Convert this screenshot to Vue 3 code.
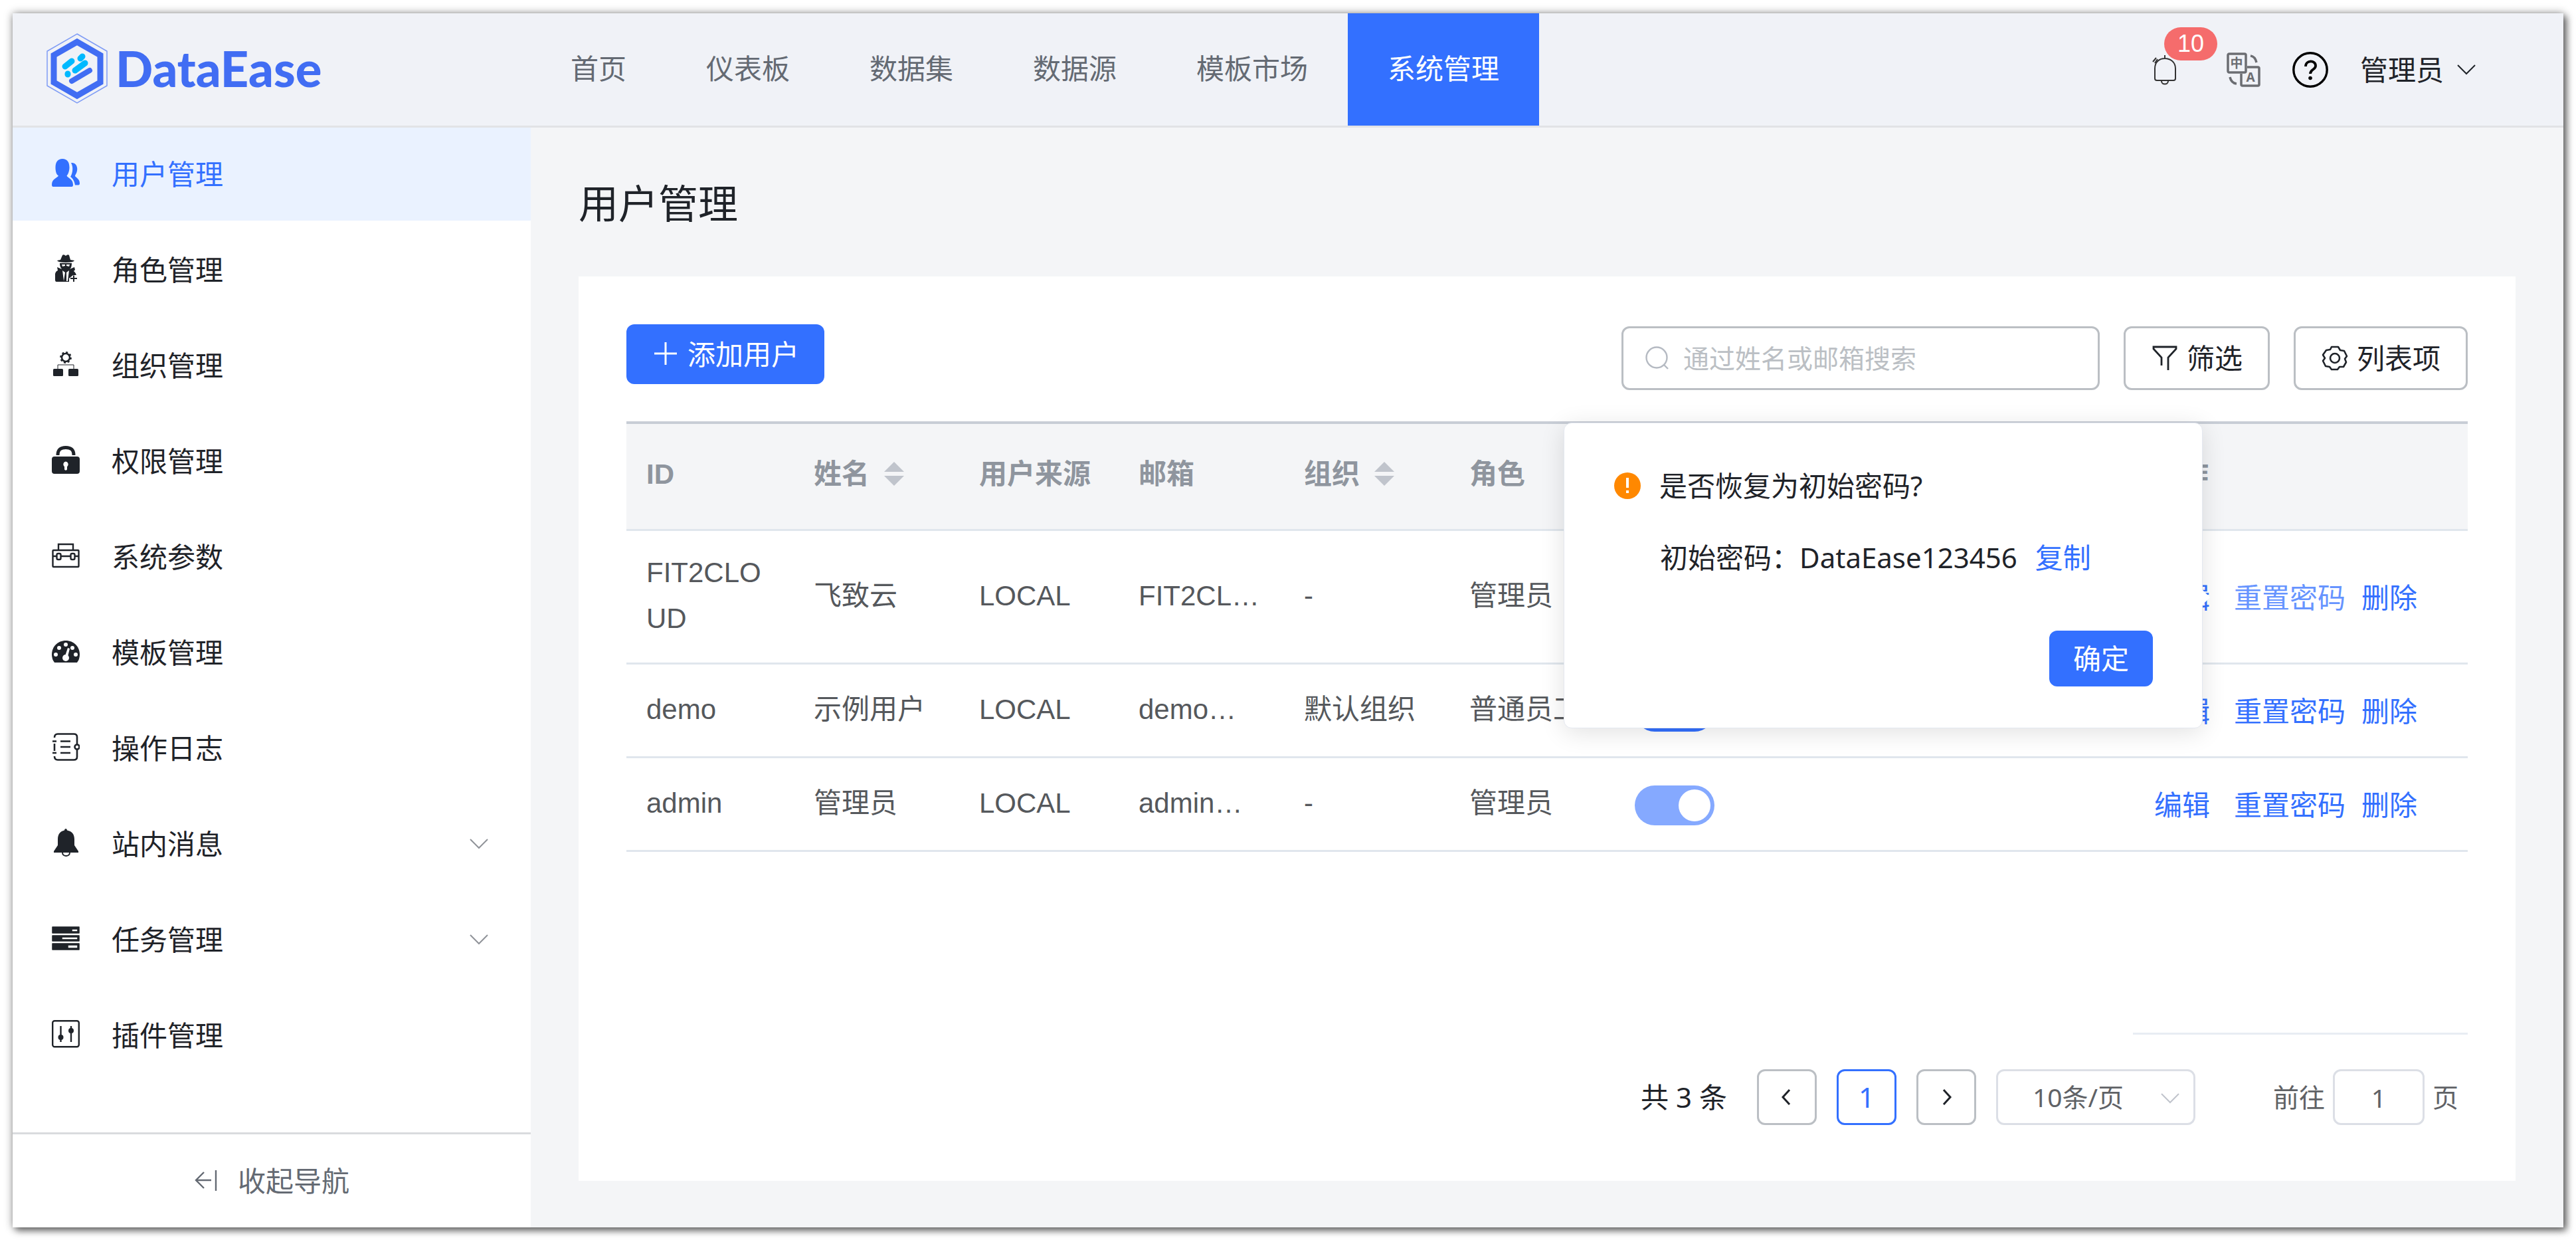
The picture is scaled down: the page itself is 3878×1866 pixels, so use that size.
<template>
  <svg class="sprite" aria-hidden="true">
    <symbol id="i-user" viewBox="0 0 42 42">
      <path d="M29 6C36 5 40 12 37.500 20C36.500 23 35 24 35 26C36 28 42 30 42 37C42 39 41 39.500 39 39.500H35C34 33 31 29 28 27C31 23 33 13 29 6Z" />
      <path d="M16 0C23 0 26.500 5 26.500 13C26.500 19 24 24 22.500 25.500C24 29 32 30 32 39C32 41.500 31 42 29 42H3C1 42 0 41.500 0 39C0 30 8 29 10 25.500C7 24 5.500 19 5.500 13C5.500 5 9 0 16 0Z" />
    </symbol>
    <symbol id="i-role" viewBox="0 0 42 42">
      <path d="M13 8L16 1Q18 -1 21 2Q24 -1 26 1L28 8L34 9Q33 12 21 12Q9 12 8 9Z" />
      <path fill-rule="evenodd" d="M12 13H30Q30 20 27 22L34 19L35 23L33 25Q37 28 37 33L27 41H7Q5 41 5 38V29Q6 25 9 24L8 19L15 22Q12 19 12 13ZM15 15L16 18L20 17V15ZM22 15V17L26 18L27 15ZM16 24L18 40L20 27ZM26 24L22 27V40L24 40Z" />
      <path d="M26 36L32 31L40 31V41H26Z" fill="#fff" />
      <path d="M28 36H38M33 31.500V41" fill="none" stroke="currentColor" stroke-width="2" />
    </symbol>
    <symbol id="i-org" viewBox="0 0 42 42">
      <circle cx="21" cy="11" r="6" fill="none" stroke="currentColor" stroke-width="2.500" />
      <circle cx="21" cy="11" r="7.800" fill="none" stroke="currentColor" stroke-width="2.200" stroke-dasharray="3 3.120" />
      <path d="M9 28V22H33V28" fill="none" stroke="currentColor" stroke-width="1" />
      <rect x="2" y="28" width="15" height="11" rx="1.500" />
      <rect x="25" y="28" width="15" height="11" rx="1.500" />
    </symbol>
    <symbol id="i-lock" viewBox="0 0 42 42">
      <path d="M9 14C9 5 14 2.500 21 2.500S33 5 33 14" fill="none" stroke="currentColor" stroke-width="5" />
      <path fill-rule="evenodd" d="M4 16H38Q42 16 42 20V38Q42 42 38 42H4Q0 42 0 38V20Q0 16 4 16ZM21 23.500A4.500 4.500 0 0 0 19 31.500V35.500Q21 38 23 35.500V31.500A4.500 4.500 0 0 0 21 23.500Z" />
    </symbol>
    <symbol id="i-box" viewBox="0 0 42 42">
      <g fill="none" stroke="currentColor" stroke-width="2.400">
        <path d="M10 13V4H32V13" />
        <rect x="1.500" y="13" width="39" height="25" rx="1" />
        <path d="M2 22H7M14 22H28M35 22H40" />
        <rect x="7.500" y="18" width="6" height="9" rx="2" />
        <rect x="28.500" y="18" width="6" height="9" rx="2" />
      </g>
    </symbol>
    <symbol id="i-gauge" viewBox="0 0 42 42">
      <path d="M4 38Q0 33 0 26C0 14 9 5 21 5S42 14 42 26Q42 33 38 38Z" />
      <g fill="#fff">
        <circle cx="6" cy="26" r="3" /><circle cx="11" cy="16" r="3" /><circle cx="21" cy="11" r="3" />
        <circle cx="31" cy="16" r="3" /><circle cx="36" cy="26" r="3" /><circle cx="21" cy="31" r="5" />
        <path d="M24 16L27 17L23.500 31H19Z" />
      </g>
    </symbol>
    <symbol id="i-log" viewBox="0 0 42 42">
      <g fill="none" stroke="currentColor" stroke-width="2.600">
        <path d="M4 7Q4 1.500 9 1.500H33Q38 1.500 38 6V17M38 25V36Q38 40.500 33 40.500H9Q4 40.500 4 35M4 16V27" />
        <path d="M1 12.500H7M1 30H7M13 12.500H28M13 21H28M13 30H28" />
        <circle cx="38" cy="21" r="3.500" />
      </g>
    </symbol>
    <symbol id="i-bell" viewBox="0 0 42 42">
      <path d="M21 0Q23 0 23 2.500C30 4 34 8 34 16V25L40 34V36H3V34L9 25V16C9 8 13 4 19 2.500Q19 0 21 0Z" />
      <path d="M16 36C16 42.500 27 42.500 27 36" fill="none" stroke="currentColor" stroke-width="2" />
    </symbol>
    <symbol id="i-task" viewBox="0 0 42 42">
      <path fill-rule="evenodd" d="M1 4H41V13H1ZM30 7V11H39V7ZM1 17H41V25H1ZM15 19V23H39V19ZM1 29H41V38H1ZM24 31V36H39V31Z" stroke="currentColor" stroke-width="1.500" stroke-linejoin="round" />
    </symbol>
    <symbol id="i-plugin" viewBox="0 0 42 42">
      <g fill="none" stroke="currentColor" stroke-width="2.400">
        <rect x="1.200" y="1.200" width="39.600" height="39" rx="3" />
        <path d="M13.500 9V33M29 9V33" />
      </g>
      <circle cx="13.500" cy="26" r="4" /><circle cx="29" cy="16" r="4" />
    </symbol>
    <symbol id="i-down" viewBox="0 0 28 28">
      <path d="M1 7L14 20L27 7" fill="none" stroke="currentColor" stroke-width="2" />
    </symbol>
  </svg>

  <div class="app">
    <header class="header">
      <a class="logo" href="#">
        <svg width="92" height="106" viewBox="0 0 92 106" fill="none">
          <path d="M46 1L91 27V79L46 105L1 79V27Z" stroke="#7f9cf5" stroke-width="1.500" />
          <path d="M46 13L81 33V74L46 94L11 74V33Z" stroke="#416df3" stroke-width="9" />
          <g stroke="#00b9ff" stroke-width="9" stroke-linecap="round">
            <path d="M28 50L38 42M51 38L54 35M43 56L58 45M32 61V62" />
            <path d="M38 72L65 56" stroke="#416df3" stroke-width="8" />
          </g>
        </svg>
        <span>DataEase</span>
      </a>
      <nav class="nav">
        <a
          v-for="item in navs"
          :key="item"
          href="#"
          :class="{ active: item === activeNav }"
          @click.prevent="activeNav = item"
        >{{ item }}</a>
      </nav>
      <div class="tools">
        <button class="bell" aria-label="消息">
          <svg width="40" height="46" viewBox="0 0 40 46" fill="none" stroke="#333" stroke-width="2">
            <path d="M19 1V6M4 36V21C4 11 11 6 19 6S35 11 35 21V36Q35 39 32 39H7Q4 39 4 36Z" />
            <path d="M14 40C14 46 24 46 24 40M1 11L6 5M4 13L8 7" />
          </svg>
          <span class="badge">10</span>
        </button>
        <button aria-label="语言">
          <svg width="51" height="52" viewBox="0 0 51 52" fill="none" stroke="#6b6d72" stroke-width="3.500">
            <rect x="2" y="2" width="27" height="28" rx="2" />
            <path d="M31 22H47Q49 22 49 24V48Q49 50 47 50H24Q22 50 22 48V32" />
            <path d="M36 5Q43 6 45 15M5 37Q7 46 15 47" />
            <g class="glyphs" stroke="none" fill="#6b6d72" text-anchor="middle">
              <text x="15" y="23">中</text>
              <text x="36" y="44">A</text>
            </g>
          </svg>
        </button>
        <button aria-label="帮助">
          <svg width="54" height="54" viewBox="0 0 54 54" fill="none" stroke="#000">
            <circle cx="27" cy="27" r="25.200" stroke-width="3.400" />
            <path d="M20 22C20 12 35 12 35 21C35 27 27 26 27 33" stroke-width="3.800" />
            <circle cx="27" cy="39.500" r="2.800" fill="#000" stroke="none" />
          </svg>
        </button>
        <button class="account">
          管理员
          <svg width="28" height="28"><use href="#i-down" /></svg>
        </button>
      </div>
    </header>

    <div class="body">
      <aside class="sidebar">
        <nav class="menu">
          <a
            v-for="item in menus"
            :key="item.name"
            href="#"
            :class="{ active: item.name === activeMenu }"
            @click.prevent="activeMenu = item.name"
          >
            <svg class="menu-icon" width="42" height="42"><use :href="'#i-' + item.icon" /></svg>
            <span>{{ item.name }}</span>
            <svg v-if="item.children" class="arrow" width="28" height="28"><use href="#i-down" /></svg>
          </a>
        </nav>
        <button class="collapse">
          <svg width="36" height="36" viewBox="0 0 36 36" fill="none" stroke="#646a73" stroke-width="2.400">
            <path d="M26 17H3M15 5L3 17L15 29M33 2V33" />
          </svg>
          收起导航
        </button>
      </aside>

      <main class="main">
        <h1>用户管理</h1>
        <section class="card">
          <div class="toolbar">
            <button class="btn primary add">
              <svg width="42" height="42" viewBox="0 0 42 42" stroke="#fff" stroke-width="3">
                <path d="M4 20H38M21 3V37" />
              </svg>
              添加用户
            </button>
            <div class="filters">
              <label class="search">
                <svg width="38" height="38" viewBox="0 0 38 38" fill="none" stroke="#b5bac2" stroke-width="2.400">
                  <circle cx="18" cy="18" r="15.500" />
                  <path d="M29 29L35 35" />
                </svg>
                <input v-model="keyword" type="text" placeholder="通过姓名或邮箱搜索" aria-label="搜索" />
              </label>
              <button class="btn plain">
                <svg width="42" height="42" viewBox="0 0 42 42" fill="none" stroke="#1f2329" stroke-width="2.800">
                  <path d="M16 32V20L4 7V4H38V7L26 20V39" />
                </svg>
                筛选
              </button>
              <button class="btn plain">
                <svg width="42" height="42" viewBox="0 0 42 42" fill="none" stroke="#1f2329" stroke-width="2.600">
                  <path d="M16 4H26L29 9L35 10L39 18L36 22L38 27L34 34L28 34L25 38H16L13 34L7 33L3 25L6 21L3 16L8 9L14 8Z" stroke-linejoin="round" />
                  <circle cx="21" cy="21" r="7" />
                </svg>
                列表项
              </button>
            </div>
          </div>

          <div class="table-wrap">
            <table>
              <colgroup>
                <col class="w-id" /><col class="w-mid" /><col class="w-mail" /><col class="w-mid" />
                <col class="w-mid" /><col class="w-mid" /><col /><col class="w-ops" />
              </colgroup>
              <thead>
                <tr>
                  <th>ID</th>
                  <th>姓名<i class="sort"></i></th>
                  <th>用户来源</th>
                  <th>邮箱</th>
                  <th>组织<i class="sort"></i></th>
                  <th>角色</th>
                  <th aria-label="状态"></th>
                  <th>操作</th>
                </tr>
              </thead>
              <tbody>
                <tr v-for="user in users" :key="user.id">
                  <td class="id">{{ user.id }}</td>
                  <td>{{ user.name }}</td>
                  <td>{{ user.from }}</td>
                  <td>{{ user.email }}</td>
                  <td>{{ user.org }}</td>
                  <td>{{ user.role }}</td>
                  <td class="control">
                    <input
                      v-model="user.enabled"
                      class="switch"
                      type="checkbox"
                      :disabled="user.id === 'admin'"
                      :aria-label="user.name"
                    />
                  </td>
                  <td class="control">
                    <div class="ops">
                      <a class="edit" href="#">编辑</a>
                      <a href="#" :class="{ focus: user.id === 'FIT2CLOUD' }">重置密码</a>
                      <a href="#">删除</a>
                    </div>
                  </td>
                </tr>
              </tbody>
            </table>

            <div v-if="showPopover" class="popover">
              <div class="pop-title">
                <svg width="40" height="40" viewBox="0 0 40 40">
                  <circle cx="20" cy="20" r="20" fill="#ff8800" />
                  <path d="M20 8V23M20 27V31" stroke="#fff" stroke-width="4" />
                </svg>
                是否恢复为初始密码?
              </div>
              <div class="pop-pwd">初始密码：DataEase123456 <a href="#">复制</a></div>
              <button class="btn primary ok" @click="showPopover = false">确定</button>
            </div>
          </div>

          <div class="pager-line"></div>
          <div class="pager">
            <span class="total">共 3 条</span>
            <button class="page" aria-label="上一页">
              <svg width="28" height="28" viewBox="0 0 28 28"><path d="M18 3L8 14L18 25" /></svg>
            </button>
            <button class="page current">1</button>
            <button class="page" aria-label="下一页">
              <svg width="28" height="28" viewBox="0 0 28 28"><path d="M10 3L20 14L10 25" /></svg>
            </button>
            <div class="size">
              <select v-model="pageSize" aria-label="每页条数">
                <option value="10">10条/页</option>
                <option value="20">20条/页</option>
              </select>
              <svg width="28" height="28"><use href="#i-down" /></svg>
            </div>
            <label class="jump">前往<input v-model="page" type="text" />页</label>
          </div>
        </section>
      </main>
    </div>
  </div>
</template>

<script setup>
import { ref } from 'vue';

const navs = ['首页', '仪表板', '数据集', '数据源', '模板市场', '系统管理'];
const activeNav = ref('系统管理');

const menus = [
  { name: '用户管理', icon: 'user' },
  { name: '角色管理', icon: 'role' },
  { name: '组织管理', icon: 'org' },
  { name: '权限管理', icon: 'lock' },
  { name: '系统参数', icon: 'box' },
  { name: '模板管理', icon: 'gauge' },
  { name: '操作日志', icon: 'log' },
  { name: '站内消息', icon: 'bell', children: true },
  { name: '任务管理', icon: 'task', children: true },
  { name: '插件管理', icon: 'plugin' }
];
const activeMenu = ref('用户管理');

const users = ref([
  { id: 'FIT2CLOUD', name: '飞致云', from: 'LOCAL', email: 'FIT2CL…', org: '-', role: '管理员', enabled: true },
  { id: 'demo', name: '示例用户', from: 'LOCAL', email: 'demo…', org: '默认组织', role: '普通员工', enabled: true },
  { id: 'admin', name: '管理员', from: 'LOCAL', email: 'admin…', org: '-', role: '管理员', enabled: true }
]);

const keyword = ref('');
const page = ref('1');
const pageSize = ref('10');
const showPopover = ref(true);
</script>

<style>
body{
  margin: 0;
  background-color: #fff;
}
</style>

<style scoped>
*{
  box-sizing: border-box;
}
.sprite{
  position: absolute;
  width: 0;
  height: 0;
}
.app{
  display: flex;
  flex-direction: column;
  min-height: calc(100vh - 39px);
  margin: 20px 19px 19px;
  background-color: #f4f5f7;
  box-shadow: 0 0 12px rgba(0, 0, 0, .4), 5px 5px 10px rgba(0, 0, 0, .5);
  font-family: 'Noto Sans', 'Noto Sans CJK SC', sans-serif;
  font-size: 42px;
  line-height: 60px;
  color: #1f2329;
}
a{
  color: inherit;
  text-decoration: none;
}
button{
  padding: 0;
  border: none;
  background: none;
  font: inherit;
  color: inherit;
  cursor: pointer;
}
input, select{
  font: inherit;
}
svg{
  display: block;
  flex: none;
  fill: currentColor;
}
svg[fill="none"]{
  fill: none;
}

.header{
  display: flex;
  height: 172px;
  background-color: #f0f2f7;
  border-bottom: 3px solid #e2e3e6;
}
.logo{
  display: flex;
  align-items: center;
  gap: 12px;
  width: 780px;
  padding: 0 0 4px 51px;
  font-family: Lato, sans-serif;
  font-size: 74px;
  font-weight: 900;
  color: #416df3;
}
.nav{
  display: flex;
}
.nav a{
  display: flex;
  align-items: center;
  padding: 0 60px 4px;
  color: #646a73;
}
.nav a.active{
  background-color: #3370ff;
  color: #fff;
}
.tools{
  display: flex;
  align-items: center;
  gap: 48px;
  margin-left: auto;
  padding-right: 132px;
}
.bell{
  position: relative;
  margin-right: 24px;
}
.badge{
  position: absolute;
  left: 18px;
  top: -41px;
  width: 80px;
  height: 50px;
  border-radius: 25px;
  background-color: #f56c6c;
  color: #fff;
  font-family: 'Liberation Sans', sans-serif;
  font-size: 36px;
  line-height: 50px;
}
.glyphs{
  font-size: 19px;
  font-weight: 700;
}
.account{
  display: flex;
  align-items: center;
  gap: 20px;
}

.body{
  display: flex;
  flex: 1;
}
.sidebar{
  display: flex;
  flex-direction: column;
  flex: none;
  width: 780px;
  background-color: #fff;
}
.menu{
  display: flex;
  flex-direction: column;
  gap: 4px;
}
.menu a{
  display: flex;
  align-items: center;
  height: 140px;
  padding: 0 64px 0 59px;
}
.menu a.active{
  background-color: #eaf2ff;
  color: #3370ff;
}
.menu-icon{
  margin: 0 48px 4px 0;
}
.arrow{
  margin-left: auto;
  color: #909399;
}
.collapse{
  display: flex;
  align-items: center;
  justify-content: center;
  gap: 30px;
  height: 143px;
  margin-top: auto;
  border-top: 3px solid #d9dbde;
  color: #646a73;
}

.main{
  display: flex;
  flex-direction: column;
  flex: 1;
  padding: 72px 72px 70px;
}
h1{
  margin: 0 0 68px;
  font-size: 60px;
  line-height: 84px;
  font-weight: 400;
}
.card{
  display: flex;
  flex-direction: column;
  flex: 1;
  padding: 72px 72px 84px;
  background-color: #fff;
}
.toolbar{
  display: flex;
  justify-content: space-between;
  align-items: flex-start;
}
.btn{
  display: flex;
  align-items: center;
  justify-content: center;
  gap: 12px;
  border-radius: 12px;
}
.primary{
  background-color: #3370ff;
  color: #fff;
}
.add{
  height: 90px;
  padding: 0 38px;
}
.filters{
  display: flex;
  gap: 36px;
  margin-top: 3px;
}
.search{
  display: flex;
  align-items: center;
  gap: 20px;
  width: 720px;
  height: 96px;
  padding: 0 32px;
  border: 3px solid #bbbfc4;
  border-radius: 12px;
}
.search input{
  flex: 1;
  min-width: 0;
  padding: 0;
  border: none;
  outline: none;
  background: none;
  font-size: 39px;
}
.search input::placeholder{
  color: #bbbfc4;
}
.plain{
  height: 96px;
  padding: 0 38px;
  border: 3px solid #bbbfc4;
}

.table-wrap{
  position: relative;
  margin-top: 47px;
}
table{
  width: 100%;
  table-layout: fixed;
  border-spacing: 0;
  font-family: 'Liberation Sans', 'Noto Sans CJK SC', sans-serif;
  line-height: 69px;
  color: #55585c;
}
.w-id{
  width: 252px;
}
.w-mid{
  width: 249px;
}
.w-mail{
  width: 240px;
}
.w-ops{
  width: 504px;
}
th{
  height: 165px;
  padding: 0 30px 8px;
  border-top: 4px solid #c8cdd6;
  border-bottom: 3px solid #e0e6ed;
  background-color: #f4f5f7;
  color: #8f959e;
  text-align: left;
  white-space: nowrap;
}
td{
  height: 141px;
  padding: 28px 30px 32px;
  border-bottom: 3px solid #e0e6ed;
  white-space: nowrap;
}
td.control{
  padding: 32px 30px 28px;
}
.id{
  white-space: normal;
  word-break: break-all;
}
.sort{
  display: inline-flex;
  flex-direction: column;
  gap: 6px;
  margin: 0 0 6px 22px;
  vertical-align: middle;
}
.sort::before, .sort::after{
  content: '';
  border: 15px solid transparent;
}
.sort::before{
  border-top: none;
  border-bottom-color: #c0c4cc;
}
.sort::after{
  border-bottom: none;
  border-top-color: #c0c4cc;
}
.switch{
  display: block;
  width: 120px;
  height: 60px;
  margin: 0;
  padding: 6px;
  appearance: none;
  border-radius: 30px;
  background-color: #bbbfc4;
}
.switch::before{
  content: '';
  display: block;
  width: 48px;
  height: 48px;
  border-radius: 50%;
  background-color: #fff;
}
.switch:checked{
  background-color: #3370ff;
}
.switch:checked::before{
  margin-left: auto;
}
.switch:disabled{
  background-color: #85a9ff;
}
.ops{
  display: flex;
  gap: 24px;
  padding-left: 2px;
  color: #3370ff;
}
.edit{
  margin-right: 12px;
}
.focus{
  color: #6694ff;
}

.popover{
  position: absolute;
  top: 2px;
  right: 399px;
  display: flex;
  flex-direction: column;
  width: 962px;
  height: 460px;
  padding: 64px 74px 62px 75px;
  border: 1px solid #e4e8f0;
  border-radius: 12px;
  background-color: #fff;
  box-shadow: 0 6px 36px rgba(0, 0, 0, .12);
}
.popover::after{
  content: '';
  position: absolute;
  right: -12px;
  top: 250px;
  border: 12px solid transparent;
  border-left-color: #fff;
  border-right: none;
}
.pop-title{
  display: flex;
  align-items: center;
  gap: 28px;
}
.pop-pwd{
  margin: 48px 0 0 69px;
}
.pop-pwd a{
  margin-left: 16px;
  color: #3370ff;
}
.ok{
  width: 156px;
  height: 84px;
  margin: auto 0 0 auto;
}

.pager-line{
  align-self: flex-end;
  width: 504px;
  height: 3px;
  margin-top: auto;
  background-color: #e8edf3;
}
.pager{
  display: flex;
  align-items: center;
  justify-content: flex-end;
  gap: 30px;
  margin-top: 52px;
}
.total{
  margin-right: 15px;
}
.page{
  display: flex;
  align-items: center;
  justify-content: center;
  width: 90px;
  height: 84px;
  border: 3px solid #bbbfc4;
  border-radius: 12px;
}
.page path{
  fill: none;
  stroke: #1f2329;
  stroke-width: 3;
}
.current{
  border-color: #3370ff;
  color: #3370ff;
}
.size{
  position: relative;
  width: 300px;
  height: 84px;
}
.size select{
  width: 100%;
  height: 100%;
  padding: 0 52px;
  appearance: none;
  border: 3px solid #dcdfe6;
  border-radius: 12px;
  background-color: #fff;
  font-size: 39px;
  color: #606266;
}
.size svg{
  position: absolute;
  right: 24px;
  top: 30px;
  color: #c0c4cc;
}
.jump{
  display: flex;
  align-items: center;
  gap: 12px;
  margin-left: 87px;
  padding-right: 14px;
  font-size: 39px;
  color: #606266;
}
.jump input{
  width: 138px;
  height: 84px;
  border: 3px solid #dcdfe6;
  border-radius: 12px;
  text-align: center;
  color: #606266;
}
</style>
